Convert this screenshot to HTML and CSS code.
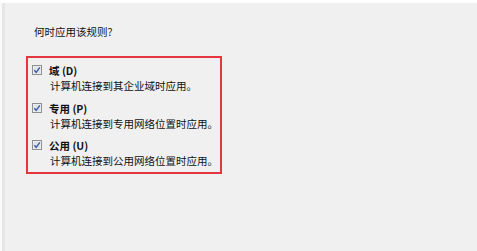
FILE: index.html
```html
<!DOCTYPE html>
<html>
<head>
    <meta charset="UTF-8">
    <title>何时应用该规则</title>
    <link rel="stylesheet" href="styles.css">
</head>
<body>
    <div id="rule">
        <p class="question">何时应用该规则?</p>
        <div class="profiles">
            <div class="profile">
                <span class="check"><svg width="10" height="10" viewBox="0 0 10 10"><rect x="0.5" y="0.5" width="9" height="9" fill="#f4f4f4" stroke="#8e8f8f"/><rect x="1.5" y="1.5" width="7" height="7" fill="#dfe3ea"/><path d="M2.3 5.2 L4.2 7.3 L7.8 2.4" fill="none" stroke="#3a5ca8" stroke-width="1.4"/></svg></span>
                <div>
                    <div class="name">域 (D)</div>
                    <div class="desc">计算机连接到其企业域时应用。</div>
                </div>
            </div>
            <div class="profile">
                <span class="check"><svg width="10" height="10" viewBox="0 0 10 10"><rect x="0.5" y="0.5" width="9" height="9" fill="#f4f4f4" stroke="#8e8f8f"/><rect x="1.5" y="1.5" width="7" height="7" fill="#dfe3ea"/><path d="M2.3 5.2 L4.2 7.3 L7.8 2.4" fill="none" stroke="#3a5ca8" stroke-width="1.4"/></svg></span>
                <div>
                    <div class="name">专用 (P)</div>
                    <div class="desc">计算机连接到专用网络位置时应用。</div>
                </div>
            </div>
            <div class="profile">
                <span class="check"><svg width="10" height="10" viewBox="0 0 10 10"><rect x="0.5" y="0.5" width="9" height="9" fill="#f4f4f4" stroke="#8e8f8f"/><rect x="1.5" y="1.5" width="7" height="7" fill="#dfe3ea"/><path d="M2.3 5.2 L4.2 7.3 L7.8 2.4" fill="none" stroke="#3a5ca8" stroke-width="1.4"/></svg></span>
                <div>
                    <div class="name">公用 (U)</div>
                    <div class="desc">计算机连接到公用网络位置时应用。</div>
                </div>
            </div>
        </div>
    </div>
</body>
</html>
```

FILE: styles.css
```css
* {
    margin: 0;
    padding: 0;
    box-sizing: border-box;
}
html, body {
    height: 100%;
    overflow: hidden;
    background: #f0f0f0;
}
body {
    font-family: "Noto Sans CJK SC", "Liberation Sans", sans-serif;
    color: #111;
}
#rule {
    height: 251px;
    border-top: 3px solid #fff;
    border-left: 2px solid #fafafa;
    box-shadow: inset 3px 0 0 #e6e6e6;
    padding: 21px 0 0 24px;
}
.question {
    font-size: 10.5px;
    line-height: 15px;
    margin-left: 8px;
}
.profiles {
    width: 196px;
    margin-top: 17px;
    border: 2px solid #e5353f;
    padding: 5px 0 4px 4px;
    display: flex;
    flex-direction: column;
    gap: 7.5px;
}
.profile {
    display: flex;
    align-items: flex-start;
    white-space: nowrap;
}
.check {
    width: 10px;
    height: 10px;
    margin-top: 2px;
    margin-right: 7px;
    display: block;
}
.check svg {
    display: block;
}
.name {
    font-size: 10.5px;
    line-height: 15px;
    font-weight: bold;
}
.desc {
    font-size: 10.5px;
    line-height: 15px;
    margin-left: 1px;
}
```
